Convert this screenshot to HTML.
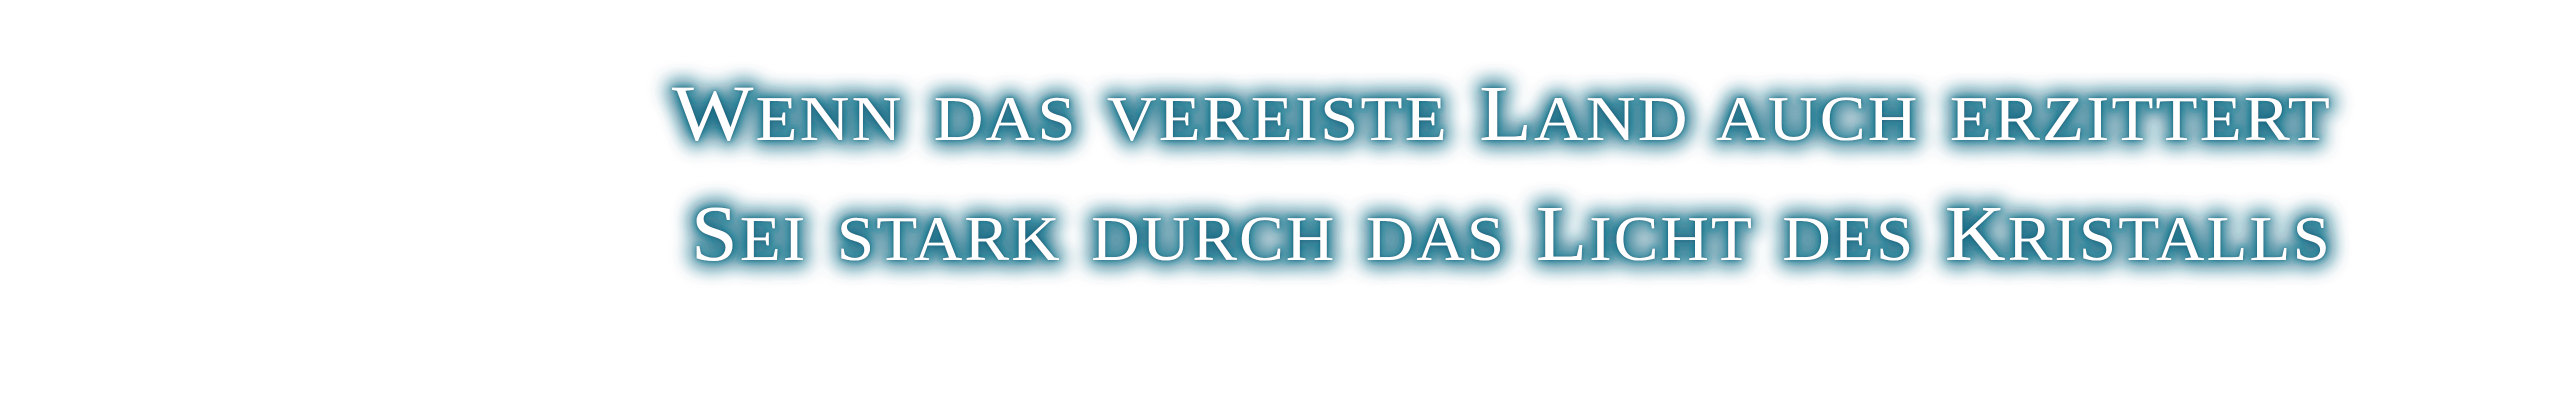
<!DOCTYPE html>
<html><head><meta charset="utf-8"><style>
html,body{margin:0;padding:0;background:#fff;width:2560px;height:400px;overflow:hidden}
svg{display:block}
text{font-family:"Liberation Serif",serif;font-size:63px;fill:#fff;word-spacing:10px;letter-spacing:2px}
.c{font-size:79px}
</style></head><body>
<svg width="2560" height="400" viewBox="0 0 2560 400">
<defs>
<filter id="g" x="-5%" y="-50%" width="110%" height="200%">
<feMorphology in="SourceAlpha" operator="dilate" radius="3" result="d"/>
<feGaussianBlur in="d" stdDeviation="10" result="b"/>
<feFlood flood-color="#1a6a84" flood-opacity="0.9"/>
<feComposite in2="b" operator="in" result="s1"/>
<feGaussianBlur in="SourceAlpha" stdDeviation="2.5" result="b2"/>
<feFlood flood-color="#0e5570" flood-opacity="0.85"/>
<feComposite in2="b2" operator="in" result="s2"/>
<feMerge><feMergeNode in="s1"/><feMergeNode in="s1"/><feMergeNode in="s2"/><feMergeNode in="SourceGraphic"/></feMerge>
</filter>
</defs>
<g filter="url(#g)">
<text x="672" y="140" textLength="1660" lengthAdjust="spacingAndGlyphs"><tspan class="c">W</tspan>ENN DAS VEREISTE <tspan class="c">L</tspan>AND AUCH ERZITTERT</text>
<text x="691" y="260" textLength="1641" lengthAdjust="spacingAndGlyphs"><tspan class="c">S</tspan>EI STARK DURCH DAS <tspan class="c">L</tspan>ICHT DES <tspan class="c">K</tspan>RISTALLS</text>
</g>
</svg>
</body></html>
